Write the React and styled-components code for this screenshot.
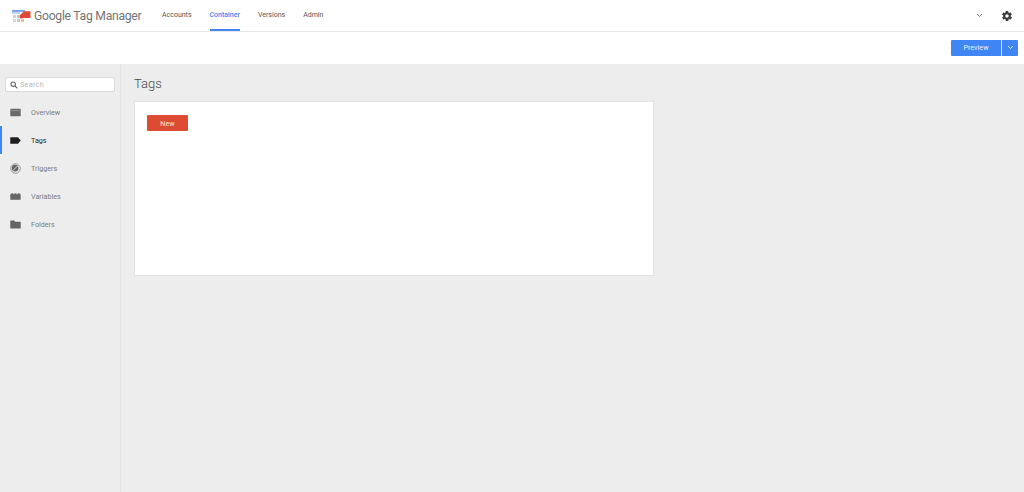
import styled, { createGlobalStyle } from 'styled-components'

const GlobalStyle = createGlobalStyle`
  html, body {
    margin: 0;
    padding: 0;
    height: 100%;
    background: #ededed;
    font-family: Roboto, "Liberation Sans", sans-serif;
  }
`

const Page = styled.div`
  width: 1024px;
  height: 492px;
  display: flex;
  flex-direction: column;
  overflow: hidden;
`

const Header = styled.header`
  height: 31px;
  display: flex;
  align-items: stretch;
  background: #fff;
  border-bottom: 1px solid #e8e8e8;
  padding: 0 11px 0 12px;
`

const Brand = styled.div`
  width: 150px;
  display: flex;
  align-items: center;
  gap: 3px;
`

const BrandName = styled.span`
  font-size: 12.2px;
  letter-spacing: -0.28px;
  color: #757575;
  white-space: nowrap;
`

const Nav = styled.nav`
  display: flex;
  gap: 18px;
`

const NavLink = styled.a`
  display: flex;
  align-items: center;
  height: 100%;
  box-sizing: border-box;
  padding-top: 1px;
  font-size: 7px;
  font-weight: ${({ $active }) => ($active ? 500 : 400)};
  color: ${({ $active }) => ($active ? '#3f86f4' : '#555')};
  border-bottom: 2px solid ${({ $active }) => ($active ? '#3f86f4' : 'transparent')};
`

const HeaderRight = styled.div`
  margin-left: auto;
  display: flex;
  align-items: center;
  gap: 18px;
`

const Toolbar = styled.div`
  height: 32px;
  background: #fff;
  display: flex;
  align-items: center;
  justify-content: flex-end;
  padding: 0 6px 0 0;
`

const SplitButton = styled.div`
  display: flex;
  height: 16px;
  margin-top: -1px;
  background: #3f86f4;
  border-radius: 1px;
  color: #fff;
`

const PreviewLabel = styled.span`
  width: 50px;
  display: flex;
  align-items: center;
  justify-content: center;
  font-size: 7.2px;
  color: #e8f0fe;
  border-right: 1px solid #cfe0fb;
`

const CaretSlot = styled.span`
  width: 16px;
  display: flex;
  align-items: center;
  justify-content: center;
`

const Body = styled.div`
  flex: 1;
  display: flex;
  min-height: 0;
`

const Sidebar = styled.aside`
  width: 120px;
  flex-shrink: 0;
  border-right: 1px solid #e4e4e4;
  padding-top: 13px;
`

const Search = styled.div`
  height: 13px;
  margin: 0 5px 6px 5px;
  padding: 0 0 0 4px;
  display: flex;
  align-items: center;
  gap: 2px;
  background: #fff;
  border: 1px solid #dcdcdc;
  border-radius: 1px;
  font-size: 7.4px;
  color: #b8b8b8;
  letter-spacing: 0.2px;
`

const SideList = styled.div`
  display: flex;
  flex-direction: column;
`

const SideItem = styled.div`
  height: 28px;
  box-sizing: border-box;
  display: flex;
  align-items: center;
  gap: 10px;
  padding-left: 8px;
  font-size: 7.2px;
  color: ${({ $active }) => ($active ? '#2a2a2a' : '#7c7c7c')};
  border-left: 2px solid ${({ $active }) => ($active ? '#3f86f4' : 'transparent')};
`

const Main = styled.main`
  flex: 1;
  padding: 11px 0 0 13px;
`

const Title = styled.h1`
  margin: 0 0 8px 0;
  height: 18px;
  line-height: 18px;
  font-size: 13px;
  font-weight: 300;
  color: #4a4a4a;
`

const Card = styled.section`
  width: 494px;
  height: 148px;
  padding: 13px 12px 12px 12px;
  background: #fff;
  border: 1px solid #e2e2e2;
`

const NewButton = styled.button`
  width: 41px;
  height: 16px;
  padding: 0;
  display: block;
  border: 0;
  border-radius: 1px;
  background: #dd4b32;
  color: #fbe3de;
  font-family: inherit;
  font-size: 7.2px;
`

const Logo = () => (
  <svg width="19" height="14" viewBox="0 0 19 14">
    <rect x="0" y="1" width="13" height="2" fill="#7ba6ec" />
    <rect x="0" y="3" width="8" height="2" fill="#c4d2ec" />
    <rect x="1" y="6" width="3" height="3" fill="#d0d0d0" />
    <rect x="5" y="6" width="3" height="3" fill="#c0c0c0" />
    <rect x="1" y="10" width="3" height="3" fill="#d8d8d8" />
    <rect x="5" y="10" width="3" height="3" fill="#c6c6c6" />
    <path d="M8 6l4-3.8h6.5V9H12L8 9.5z" fill="#df4a3a" />
    <rect x="9" y="10" width="3" height="3" fill="#eeb9b2" />
  </svg>
)

const Gear = () => (
  <svg width="12" height="12" viewBox="0 0 24 24" fill="#3c3c3c">
    <path d="M19.4 13a7.5 7.5 0 0 0 0-2l2.1-1.6a.5.5 0 0 0 .1-.6l-2-3.5a.5.5 0 0 0-.6-.2l-2.5 1a7.3 7.3 0 0 0-1.7-1l-.4-2.7a.5.5 0 0 0-.5-.4h-4a.5.5 0 0 0-.5.4l-.4 2.7a7.3 7.3 0 0 0-1.7 1l-2.5-1a.5.5 0 0 0-.6.2l-2 3.5a.5.5 0 0 0 .1.6L4.6 11a7.5 7.5 0 0 0 0 2l-2.1 1.6a.5.5 0 0 0-.1.6l2 3.5a.5.5 0 0 0 .6.2l2.5-1a7.3 7.3 0 0 0 1.7 1l.4 2.7a.5.5 0 0 0 .5.4h4a.5.5 0 0 0 .5-.4l.4-2.7a7.3 7.3 0 0 0 1.7-1l2.5 1a.5.5 0 0 0 .6-.2l2-3.5a.5.5 0 0 0-.1-.6zM12 15.5a3.5 3.5 0 1 1 0-7 3.5 3.5 0 0 1 0 7z" />
  </svg>
)

const Caret = ({ color }) => (
  <svg width="7" height="5" viewBox="0 0 7 5" fill="none" stroke={color} strokeWidth="0.9">
    <path d="M1 1l2.5 2.5L6 1" />
  </svg>
)

const SearchIcon = () => (
  <svg width="8" height="8" viewBox="0 0 8 8" fill="none" stroke="#666" strokeWidth="1.1">
    <circle cx="3.2" cy="3.2" r="2.2" />
    <path d="M5 5l2.4 2.4" />
  </svg>
)

const Icon = ({ children }) => (
  <svg width="11" height="11" viewBox="0 0 12 12">{children}</svg>
)

const OverviewIcon = () => (
  <Icon>
    <path d="M1 1.8h10a.7.7 0 0 1 .7.7v7a.7.7 0 0 1-.7.7H1a.7.7 0 0 1-.7-.7v-7A.7.7 0 0 1 1 1.8z" fill="#6a6a6a" />
    <path d="M1.2 4h9.6" stroke="#a5a5a5" strokeWidth="0.7" />
  </Icon>
)

const TagIcon = () => (
  <Icon>
    <path d="M.3 2.5h8.4L11.7 6 8.7 9.5H.3z" fill="#1f1f1f" />
  </Icon>
)

const TriggerIcon = () => (
  <Icon>
    <circle cx="6" cy="6" r="5.2" fill="none" stroke="#777" strokeWidth="0.8" />
    <circle cx="5.6" cy="5.6" r="3.6" fill="#666" />
    <path d="M3.2 8.2 8.2 3.2" stroke="#ededed" strokeWidth="0.9" />
  </Icon>
)

const VariablesIcon = () => (
  <Icon>
    <path d="M.3 3.5h1v-1h2.2v1h1.4v-1h2.2v1h1.4v-1h2.2v1h.9v6H.3z" fill="#666" />
  </Icon>
)

const FolderIcon = () => (
  <Icon>
    <path d="M1 1.6h3.6l1 1.4H11a.7.7 0 0 1 .7.7v6a.7.7 0 0 1-.7.7H1a.7.7 0 0 1-.7-.7V2.3A.7.7 0 0 1 1 1.6z" fill="#666" />
  </Icon>
)

const sideItems = [
  { label: 'Overview', icon: <OverviewIcon /> },
  { label: 'Tags', icon: <TagIcon />, active: true },
  { label: 'Triggers', icon: <TriggerIcon /> },
  { label: 'Variables', icon: <VariablesIcon /> },
  { label: 'Folders', icon: <FolderIcon /> },
]

const App = () => (
  <Page>
    <GlobalStyle />
    <Header>
      <Brand>
        <Logo />
        <BrandName>Google Tag Manager</BrandName>
      </Brand>
      <Nav>
        <NavLink>Accounts</NavLink>
        <NavLink $active>Container</NavLink>
        <NavLink>Versions</NavLink>
        <NavLink>Admin</NavLink>
      </Nav>
      <HeaderRight>
        <Caret color="#666" />
        <Gear />
      </HeaderRight>
    </Header>
    <Toolbar>
      <SplitButton>
        <PreviewLabel>Preview</PreviewLabel>
        <CaretSlot><Caret color="#dbe8fd" /></CaretSlot>
      </SplitButton>
    </Toolbar>
    <Body>
      <Sidebar>
        <Search>
          <SearchIcon />
          Search
        </Search>
        <SideList>
          {sideItems.map((item) => (
            <SideItem key={item.label} $active={item.active}>
              {item.icon}
              {item.label}
            </SideItem>
          ))}
        </SideList>
      </Sidebar>
      <Main>
        <Title>Tags</Title>
        <Card>
          <NewButton>New</NewButton>
        </Card>
      </Main>
    </Body>
  </Page>
)

export default App
